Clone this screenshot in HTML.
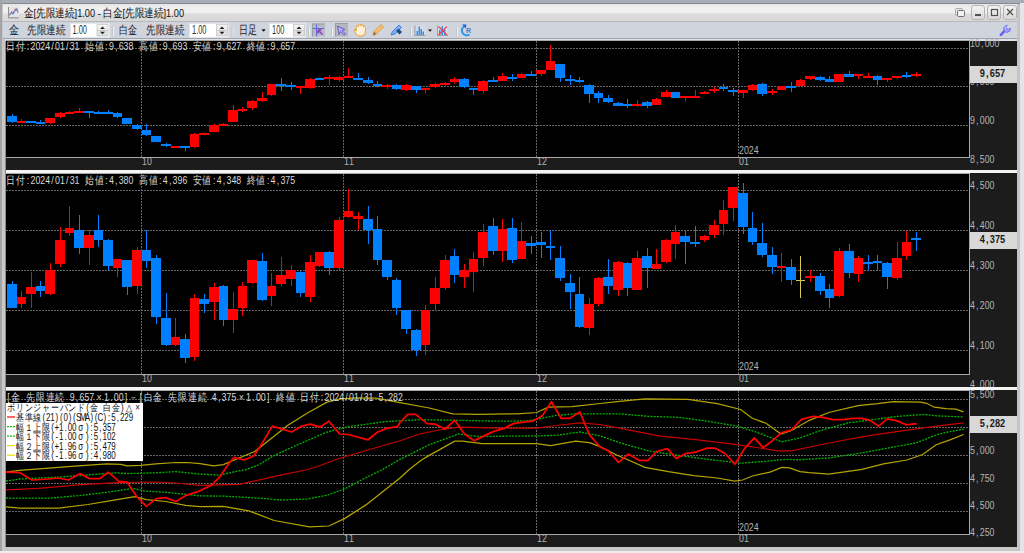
<!DOCTYPE html>
<html><head><meta charset="utf-8"><style>
html,body{margin:0;padding:0}
body{width:1024px;height:553px;overflow:hidden;position:relative;background:#e6e6e8;font-family:"Liberation Sans",sans-serif}
.a{position:absolute}
</style></head><body>
<div class="a" style="left:0;top:0;width:1024px;height:3px;background:#a8acb6"></div>
<div class="a" style="left:0;top:3px;width:1024px;height:1px;background:#8a8a8e"></div>
<div class="a" style="left:0;top:0;width:2px;height:553px;background:#a4a4a6"></div>
<div class="a" style="left:2px;top:4px;width:1016px;height:549px;background:#c8c8c8"></div>
<div class="a" style="left:5px;top:39px;width:1px;height:508px;background:#8c8c8c"></div>
<div class="a" style="left:1017px;top:4px;width:3px;height:549px;background:#c4c4c4"></div>
<div class="a" style="left:1020px;top:3px;width:4px;height:550px;background:#e4e4ea"></div>
<div class="a" style="left:3px;top:4px;width:1014px;height:17px;background:linear-gradient(#e4e4e4 0px,#f0f0f0 4px,#eeeeee 9px,#dcdcdc 10px,#d8d8d8 17px)"></div>
<div class="a" style="left:3px;top:21px;width:1014px;height:1px;background:#b8b8b8"></div>
<div class="a" style="left:3px;top:22px;width:1014px;height:16px;background:#d0d4dc"></div>
<div class="a" style="left:3px;top:38px;width:1014px;height:1px;background:#9ca4b4"></div>
<div class="a" style="left:2px;top:547px;width:1016px;height:4px;background:#c8c8c8"></div>
<div class="a" style="left:0px;top:551px;width:1024px;height:2px;background:#eeeef0"></div>
<svg class="a" style="left:0;top:0" width="1024" height="40">
<style>
.tt{font-family:"Liberation Sans",sans-serif;font-size:11.5px;fill:#101010}
.tb{font-family:"Liberation Sans",sans-serif;font-size:12px;fill:#202028}
.inp{font-family:"Liberation Sans",sans-serif;font-size:12px;fill:#303030}
</style>
<!-- title icon -->
<rect x="8" y="7" width="11" height="12" fill="#e4e4e4"/>
<rect x="8" y="7" width="1" height="11" fill="#909090"/>
<rect x="8" y="17" width="11" height="1.5" fill="#a0a0a0"/>
<polyline points="9.5,15.5 11.5,12.5 13,14 15.5,10 16.5,9 18,12.5" fill="none" stroke="#50a0e8" stroke-width="1.3"/>
<polyline points="9.5,14.5 11.5,12 13,13.5 15,9.5 16.5,8.5 18,12" fill="none" stroke="#f04050" stroke-width="1.2" stroke-dasharray="1.5 1.5"/>
<text x="24" y="16.5" class="tt" textLength="160" lengthAdjust="spacingAndGlyphs">金[先限連続]1.00 - 白金[先限連続]1.00</text>
<!-- window buttons -->
<g fill="none" stroke="#8a8a8a" stroke-width="1">
<rect x="955.5" y="8.5" width="7" height="7" rx="1" fill="#e8e8e8" stroke="#a8a8a8"/>
<rect x="957.5" y="10.5" width="7" height="6" rx="1" fill="#f0f0f0" stroke="#707070"/>
</g>
<rect x="971.5" y="5.5" width="13" height="14" rx="2.5" fill="url(#gb)" stroke="#b4b4b4"/>
<rect x="987.5" y="5.5" width="13" height="14" rx="2.5" fill="url(#gb)" stroke="#b4b4b4"/>
<rect x="1003.5" y="5.5" width="13" height="14" rx="2.5" fill="url(#gb)" stroke="#b4b4b4"/>
<defs><linearGradient id="gb" x1="0" y1="0" x2="0" y2="1"><stop offset="0" stop-color="#f4f4f4"/><stop offset="1" stop-color="#d8d8d8"/></linearGradient>
<linearGradient id="sp" x1="0" y1="0" x2="0" y2="1"><stop offset="0" stop-color="#f6f6f6"/><stop offset="1" stop-color="#dcdcdc"/></linearGradient></defs>
<rect x="975" y="14" width="6" height="2" fill="#505050"/>
<rect x="991.5" y="9.5" width="6" height="6" fill="none" stroke="#505050" stroke-width="1.2"/>
<path d="M1007 9 L1013 15 M1013 9 L1007 15" stroke="#505050" stroke-width="1.3"/>
<!-- toolbar -->
<text x="9" y="34" class="tb" textLength="10" lengthAdjust="spacingAndGlyphs">金</text>
<text x="27" y="34" class="tb" textLength="38" lengthAdjust="spacingAndGlyphs">先限連続</text>
<rect x="70.5" y="23.5" width="39" height="14" fill="#fff" stroke="#e4e6ea"/>
<text x="72.5" y="33.5" class="inp" textLength="14.5" lengthAdjust="spacingAndGlyphs">1.00</text>
<rect x="97" y="24.5" width="11" height="11.5" fill="url(#sp)" stroke="#c8c8c8" stroke-width="0.8"/>
<rect x="97" y="30" width="11" height="0.8" fill="#c0c0c0"/>
<path d="M100 29 L102.5 26.5 L105 29 Z M100 31.8 L102.5 34.3 L105 31.8 Z" fill="#202020"/>
<rect x="113" y="27" width="1" height="9" fill="#f2f2f2"/><rect x="112" y="27" width="1" height="9" fill="#c0c4cc"/>
<text x="119" y="34" class="tb" textLength="18" lengthAdjust="spacingAndGlyphs">白金</text>
<text x="146" y="34" class="tb" textLength="38" lengthAdjust="spacingAndGlyphs">先限連続</text>
<rect x="189.5" y="23.5" width="39" height="14" fill="#fff" stroke="#e4e6ea"/>
<text x="192" y="33.5" class="inp" textLength="14.5" lengthAdjust="spacingAndGlyphs">1.00</text>
<rect x="216.5" y="24.5" width="11" height="11.5" fill="url(#sp)" stroke="#c8c8c8" stroke-width="0.8"/>
<rect x="216.5" y="30" width="11" height="0.8" fill="#c0c0c0"/>
<path d="M219.5 29 L222 26.5 L224.5 29 Z M219.5 31.8 L222 34.3 L224.5 31.8 Z" fill="#202020"/>
<rect x="232.5" y="27" width="1" height="9" fill="#f2f2f2"/><rect x="231.5" y="27" width="1" height="9" fill="#c0c4cc"/>
<text x="239" y="34" class="tb" textLength="18" lengthAdjust="spacingAndGlyphs">日足</text>
<path d="M261.5 29.3 L265.7 29.3 L263.6 31.8 Z" fill="#101010"/>
<rect x="269.5" y="23.5" width="36" height="14" fill="#fff" stroke="#e4e6ea"/>
<text x="272" y="33.5" class="inp" textLength="12.5" lengthAdjust="spacingAndGlyphs">100</text>
<rect x="293.5" y="24.5" width="11" height="11.5" fill="url(#sp)" stroke="#c8c8c8" stroke-width="0.8"/>
<rect x="293.5" y="30" width="11" height="0.8" fill="#c0c0c0"/>
<path d="M296.5 29 L299 26.5 L301.5 29 Z M296.5 31.8 L299 34.3 L301.5 31.8 Z" fill="#202020"/>
<rect x="309" y="27" width="1" height="9" fill="#f2f2f2"/><rect x="308" y="27" width="1" height="9" fill="#c0c4cc"/>
<!-- pressed crosshair -->
<rect x="312" y="23.5" width="13" height="13" fill="#b8bcc2"/>
<rect x="312" y="23.5" width="13" height="1" fill="#9a9ea4"/><rect x="312" y="23.5" width="1" height="13" fill="#9a9ea4"/>
<rect x="316" y="24.5" width="1" height="12" fill="#5a6ad8"/>
<rect x="313" y="28" width="11" height="1" fill="#5a6ad8"/>
<path d="M318 30 L322.5 34.5 M318 30 L321.5 30 M318 30 L318 33.5" stroke="#9040c0" stroke-width="1.6"/>
<rect x="332" y="27" width="1" height="9" fill="#f2f2f2"/><rect x="331" y="27" width="1" height="9" fill="#c0c4cc"/>
<!-- pressed pointer -->
<rect x="335" y="23" width="13" height="13.5" fill="#b4b8bc"/>
<rect x="335" y="23" width="13" height="1" fill="#9a9ea4"/><rect x="335" y="23" width="1" height="13.5" fill="#9a9ea4"/>
<path d="M337.5 26 L345 29.5 L342 30.5 L345.5 34 L344 35 L340.5 31.5 L339 34.5 Z" fill="#b8b0f0" stroke="#7058d0" stroke-width="1"/>
<!-- hand -->
<g fill="#fff2d8" stroke="#e8962a" stroke-width="0.9">
<path d="M356.2 31 L356.2 27 Q356.2 25.6 357.4 25.6 Q358.6 25.6 358.6 27 L358.6 25.6 Q358.6 24.2 359.8 24.2 Q361 24.2 361 25.6 L361 26 Q361 24.8 362.2 24.8 Q363.4 24.8 363.4 26 L363.4 27.2 Q363.5 26.2 364.5 26.3 Q365.5 26.4 365.5 27.6 L365.2 32.5 Q364.8 36 361.5 36 L359 36 Q356.8 35.8 355.6 33.2 L354.4 30.6 Q354 29.4 355 29.2 Q355.8 29.1 356.2 31 Z"/>
</g>
<!-- pencil -->
<path d="M373 35.5 L374 31.5 L381 24.5 L383.5 27 L376.5 34 Z" fill="#f4c070" stroke="#e09a40" stroke-width="0.9"/>
<path d="M373 35.5 L374 31.5 L376.5 34 Z" fill="#a07040"/>
<!-- marker -->
<path d="M391 35 L392.5 31.5 L399 25 L401.5 27.5 L395 34 Z" fill="#80b0f0" stroke="#3a78d8" stroke-width="0.9"/>
<path d="M396 31 L399.5 34.5 L402 32 L398.5 28.5 Z" fill="#204a90"/>
<rect x="411" y="27" width="1" height="9" fill="#f2f2f2"/><rect x="410" y="27" width="1" height="9" fill="#c0c4cc"/>
<!-- bar chart -->
<rect x="414.5" y="25.5" width="11" height="10.5" fill="#d8dce2"/>
<rect x="414.5" y="25.5" width="1" height="10.5" fill="#9aa0a8"/>
<rect x="414.5" y="35" width="11" height="1" fill="#9aa0a8"/>
<rect x="416.5" y="31" width="1.5" height="4" fill="#3090f0"/>
<rect x="418.5" y="26.5" width="1.5" height="8.5" fill="#3090f0"/>
<rect x="420.5" y="29" width="1.5" height="6" fill="#3090f0"/>
<rect x="422.5" y="31.5" width="1.5" height="3.5" fill="#3090f0"/>
<path d="M428 29.5 L432 29.5 L430 31.8 Z" fill="#101010"/>
<!-- red x bars -->
<rect x="437" y="25.5" width="11" height="10.5" fill="#d8dce2"/>
<rect x="437" y="25.5" width="1" height="10.5" fill="#9aa0a8"/>
<rect x="437" y="35" width="11" height="1" fill="#9aa0a8"/>
<rect x="439" y="30" width="1.5" height="5" fill="#3090f0"/>
<rect x="441.5" y="26" width="1.5" height="9" fill="#3090f0"/>
<rect x="444" y="30" width="1.5" height="5" fill="#3090f0"/>
<path d="M438.5 26.5 L447 35 M447 26.5 L438.5 35" stroke="#f04050" stroke-width="1.3"/>
<rect x="457" y="27" width="1" height="9" fill="#f2f2f2"/><rect x="456" y="27" width="1" height="9" fill="#c0c4cc"/>
<!-- refresh -->
<path d="M464 26.5 A4.8 4.8 0 1 0 469.5 34.5" fill="none" stroke="#2a9ae8" stroke-width="2"/>
<path d="M462 24.5 L466.5 24.5 L465.5 28.5 Z" fill="#2060e0"/>
<text x="466" y="33" style="font-family:'Liberation Sans',sans-serif;font-size:7px;font-weight:bold;fill:#3a80d0">R</text>
<!-- wrench -->
<path d="M1000.8 34.8 L1005.2 30.4" stroke="#6464f4" stroke-width="2.6" stroke-linecap="round"/>
<path d="M1004.2 31.2 Q1002.6 27.6 1005.6 25.8 L1007.2 25.2 L1006.2 27.8 L1008 29.4 L1010.6 28.4 Q1010.4 32.2 1006.6 32.4 Z" fill="#a0a0fa" stroke="#6a6af2" stroke-width="0.9"/>
<path d="M1005.4 28.6 Q1005.6 27 1006.6 26.4" stroke="#ffffff" stroke-width="0.7" fill="none"/>
</svg>

<svg width="1024" height="553" viewBox="0 0 1024 553" style="position:absolute;left:0;top:0">
<style>
.ax{font-family:"Liberation Sans",sans-serif;font-size:11px;fill:#b4b4b4}
.inf{font-family:"Liberation Sans",sans-serif;font-size:11px;fill:#d8d8d8}
.lg{font-family:"Liberation Sans",sans-serif;font-size:10px;fill:#101010}
.pb{font-family:"Liberation Sans",sans-serif;font-size:10px;font-weight:bold;fill:#181818}
</style>
<defs><clipPath id="c1"><rect x="6" y="41" width="963" height="116"/></clipPath><clipPath id="c2"><rect x="6" y="174" width="963" height="200"/></clipPath><clipPath id="c3"><rect x="6" y="391" width="963" height="143"/></clipPath></defs>
<rect x="6" y="39" width="1011" height="508" fill="#1c1c1c"/>
<rect x="5" y="39" width="1012" height="2" fill="#e2e2e2"/>
<rect x="6" y="41" width="963" height="116" fill="#000"/>
<g clip-path="url(#c1)" shape-rendering="crispEdges">
<line x1="6" y1="48.5" x2="969" y2="48.5" stroke="#686868" stroke-width="1" stroke-dasharray="2 1"/>
<line x1="6" y1="86.5" x2="969" y2="86.5" stroke="#686868" stroke-width="1" stroke-dasharray="2 1"/>
<line x1="6" y1="125.5" x2="969" y2="125.5" stroke="#686868" stroke-width="1" stroke-dasharray="2 1"/>
<line x1="141.5" y1="41" x2="141.5" y2="157" stroke="#686868" stroke-width="1" stroke-dasharray="2 1"/>
<line x1="343.5" y1="41" x2="343.5" y2="157" stroke="#686868" stroke-width="1" stroke-dasharray="2 1"/>
<line x1="536.5" y1="41" x2="536.5" y2="157" stroke="#686868" stroke-width="1" stroke-dasharray="2 1"/>
<line x1="738.5" y1="41" x2="738.5" y2="157" stroke="#686868" stroke-width="1" stroke-dasharray="2 1"/>
</g>
<g clip-path="url(#c1)" shape-rendering="crispEdges"><rect x="12" y="114" width="1" height="9" fill="#0080ff"/>
<rect x="7" y="116" width="10" height="6" fill="#0080ff"/>
<rect x="21" y="119" width="1" height="4" fill="#ff0000"/>
<rect x="17" y="121" width="9" height="2" fill="#ff0000"/>
<rect x="31" y="121" width="1" height="1" fill="#0080ff"/>
<rect x="26" y="121" width="10" height="2" fill="#0080ff"/>
<rect x="40" y="120" width="1" height="4" fill="#0080ff"/>
<rect x="36" y="122" width="9" height="2" fill="#0080ff"/>
<rect x="50" y="118" width="1" height="6" fill="#ff0000"/>
<rect x="45" y="118" width="10" height="5" fill="#ff0000"/>
<rect x="60" y="112" width="1" height="6" fill="#ff0000"/>
<rect x="55" y="113" width="10" height="4" fill="#ff0000"/>
<rect x="69" y="111" width="1" height="2" fill="#ff0000"/>
<rect x="65" y="112" width="9" height="2" fill="#ff0000"/>
<rect x="79" y="108" width="1" height="4" fill="#ff0000"/>
<rect x="74" y="111" width="10" height="2" fill="#ff0000"/>
<rect x="89" y="111" width="1" height="7" fill="#0080ff"/>
<rect x="84" y="111" width="10" height="2" fill="#0080ff"/>
<rect x="98" y="111" width="1" height="2" fill="#0080ff"/>
<rect x="94" y="112" width="9" height="2" fill="#0080ff"/>
<rect x="108" y="110" width="1" height="4" fill="#0080ff"/>
<rect x="103" y="112" width="10" height="2" fill="#0080ff"/>
<rect x="117" y="112" width="1" height="6" fill="#0080ff"/>
<rect x="113" y="113" width="9" height="4" fill="#0080ff"/>
<rect x="127" y="118" width="1" height="6" fill="#0080ff"/>
<rect x="122" y="118" width="10" height="6" fill="#0080ff"/>
<rect x="137" y="124" width="1" height="6" fill="#0080ff"/>
<rect x="132" y="125" width="10" height="4" fill="#0080ff"/>
<rect x="146" y="124" width="1" height="12" fill="#0080ff"/>
<rect x="142" y="130" width="9" height="5" fill="#0080ff"/>
<rect x="156" y="136" width="1" height="6" fill="#0080ff"/>
<rect x="151" y="136" width="10" height="6" fill="#0080ff"/>
<rect x="166" y="143" width="1" height="4" fill="#0080ff"/>
<rect x="161" y="144" width="10" height="2" fill="#0080ff"/>
<rect x="175" y="146" width="1" height="2" fill="#ff0000"/>
<rect x="171" y="146" width="9" height="2" fill="#ff0000"/>
<rect x="185" y="146" width="1" height="5" fill="#0080ff"/>
<rect x="180" y="146" width="10" height="2" fill="#0080ff"/>
<rect x="194" y="133" width="1" height="15" fill="#ff0000"/>
<rect x="190" y="134" width="9" height="13" fill="#ff0000"/>
<rect x="204" y="133" width="1" height="2" fill="#ff0000"/>
<rect x="199" y="133" width="10" height="2" fill="#ff0000"/>
<rect x="214" y="124" width="1" height="8" fill="#ff0000"/>
<rect x="209" y="125" width="10" height="7" fill="#ff0000"/>
<rect x="223" y="123" width="1" height="3" fill="#ff0000"/>
<rect x="219" y="124" width="9" height="2" fill="#ff0000"/>
<rect x="233" y="105" width="1" height="17" fill="#ff0000"/>
<rect x="228" y="110" width="10" height="12" fill="#ff0000"/>
<rect x="242" y="107" width="1" height="5" fill="#ff0000"/>
<rect x="238" y="109" width="9" height="2" fill="#ff0000"/>
<rect x="252" y="100" width="1" height="10" fill="#ff0000"/>
<rect x="247" y="101" width="10" height="7" fill="#ff0000"/>
<rect x="262" y="92" width="1" height="10" fill="#ff0000"/>
<rect x="257" y="98" width="10" height="3" fill="#ff0000"/>
<rect x="271" y="84" width="1" height="12" fill="#ff0000"/>
<rect x="267" y="84" width="9" height="11" fill="#ff0000"/>
<rect x="281" y="78" width="1" height="13" fill="#0080ff"/>
<rect x="276" y="84" width="10" height="2" fill="#0080ff"/>
<rect x="291" y="82" width="1" height="8" fill="#0080ff"/>
<rect x="286" y="85" width="10" height="2" fill="#0080ff"/>
<rect x="300" y="86" width="1" height="8" fill="#ff0000"/>
<rect x="296" y="86" width="9" height="2" fill="#ff0000"/>
<rect x="310" y="78" width="1" height="11" fill="#ff0000"/>
<rect x="305" y="79" width="10" height="9" fill="#ff0000"/>
<rect x="319" y="78" width="1" height="2" fill="#0080ff"/>
<rect x="315" y="78" width="9" height="2" fill="#0080ff"/>
<rect x="329" y="75" width="1" height="10" fill="#ff0000"/>
<rect x="324" y="77" width="10" height="2" fill="#ff0000"/>
<rect x="339" y="76" width="1" height="6" fill="#ff0000"/>
<rect x="334" y="77" width="10" height="3" fill="#ff0000"/>
<rect x="348" y="68" width="1" height="10" fill="#ff0000"/>
<rect x="344" y="76" width="9" height="2" fill="#ff0000"/>
<rect x="358" y="73" width="1" height="7" fill="#0080ff"/>
<rect x="353" y="78" width="10" height="2" fill="#0080ff"/>
<rect x="368" y="77" width="1" height="7" fill="#0080ff"/>
<rect x="363" y="80" width="10" height="3" fill="#0080ff"/>
<rect x="377" y="81" width="1" height="6" fill="#0080ff"/>
<rect x="373" y="84" width="9" height="2" fill="#0080ff"/>
<rect x="387" y="84" width="1" height="5" fill="#ff0000"/>
<rect x="382" y="85" width="10" height="2" fill="#ff0000"/>
<rect x="396" y="84" width="1" height="6" fill="#0080ff"/>
<rect x="392" y="85" width="9" height="4" fill="#0080ff"/>
<rect x="406" y="84" width="1" height="7" fill="#ff0000"/>
<rect x="401" y="85" width="10" height="5" fill="#ff0000"/>
<rect x="416" y="86" width="1" height="7" fill="#0080ff"/>
<rect x="411" y="86" width="10" height="4" fill="#0080ff"/>
<rect x="425" y="88" width="1" height="5" fill="#ff0000"/>
<rect x="421" y="88" width="9" height="2" fill="#ff0000"/>
<rect x="435" y="83" width="1" height="5" fill="#ff0000"/>
<rect x="430" y="84" width="10" height="3" fill="#ff0000"/>
<rect x="445" y="82" width="1" height="5" fill="#ff0000"/>
<rect x="440" y="83" width="10" height="2" fill="#ff0000"/>
<rect x="454" y="77" width="1" height="7" fill="#ff0000"/>
<rect x="450" y="79" width="9" height="3" fill="#ff0000"/>
<rect x="464" y="78" width="1" height="10" fill="#0080ff"/>
<rect x="459" y="79" width="10" height="8" fill="#0080ff"/>
<rect x="473" y="88" width="1" height="7" fill="#0080ff"/>
<rect x="469" y="88" width="9" height="2" fill="#0080ff"/>
<rect x="483" y="80" width="1" height="13" fill="#ff0000"/>
<rect x="478" y="81" width="10" height="10" fill="#ff0000"/>
<rect x="493" y="77" width="1" height="5" fill="#0080ff"/>
<rect x="488" y="80" width="10" height="2" fill="#0080ff"/>
<rect x="502" y="73" width="1" height="8" fill="#ff0000"/>
<rect x="498" y="76" width="9" height="5" fill="#ff0000"/>
<rect x="512" y="74" width="1" height="7" fill="#0080ff"/>
<rect x="507" y="77" width="10" height="2" fill="#0080ff"/>
<rect x="521" y="73" width="1" height="5" fill="#ff0000"/>
<rect x="517" y="74" width="9" height="4" fill="#ff0000"/>
<rect x="531" y="71" width="1" height="5" fill="#0080ff"/>
<rect x="526" y="74" width="10" height="2" fill="#0080ff"/>
<rect x="541" y="70" width="1" height="6" fill="#ff0000"/>
<rect x="536" y="70" width="10" height="4" fill="#ff0000"/>
<rect x="550" y="45" width="1" height="25" fill="#ff0000"/>
<rect x="546" y="61" width="9" height="9" fill="#ff0000"/>
<rect x="560" y="64" width="1" height="18" fill="#0080ff"/>
<rect x="555" y="64" width="10" height="14" fill="#0080ff"/>
<rect x="570" y="75" width="1" height="10" fill="#0080ff"/>
<rect x="565" y="79" width="10" height="2" fill="#0080ff"/>
<rect x="579" y="77" width="1" height="6" fill="#0080ff"/>
<rect x="575" y="80" width="9" height="2" fill="#0080ff"/>
<rect x="589" y="84" width="1" height="19" fill="#0080ff"/>
<rect x="584" y="85" width="10" height="9" fill="#0080ff"/>
<rect x="598" y="91" width="1" height="12" fill="#0080ff"/>
<rect x="594" y="93" width="9" height="5" fill="#0080ff"/>
<rect x="608" y="95" width="1" height="8" fill="#0080ff"/>
<rect x="603" y="98" width="10" height="4" fill="#0080ff"/>
<rect x="618" y="102" width="1" height="4" fill="#0080ff"/>
<rect x="613" y="103" width="10" height="3" fill="#0080ff"/>
<rect x="627" y="99" width="1" height="9" fill="#0080ff"/>
<rect x="623" y="104" width="9" height="2" fill="#0080ff"/>
<rect x="637" y="100" width="1" height="7" fill="#ff0000"/>
<rect x="632" y="104" width="10" height="2" fill="#ff0000"/>
<rect x="647" y="101" width="1" height="7" fill="#0080ff"/>
<rect x="642" y="102" width="10" height="4" fill="#0080ff"/>
<rect x="656" y="98" width="1" height="7" fill="#ff0000"/>
<rect x="652" y="99" width="9" height="6" fill="#ff0000"/>
<rect x="666" y="90" width="1" height="7" fill="#ff0000"/>
<rect x="661" y="92" width="10" height="5" fill="#ff0000"/>
<rect x="675" y="92" width="1" height="6" fill="#0080ff"/>
<rect x="671" y="92" width="9" height="6" fill="#0080ff"/>
<rect x="685" y="96" width="1" height="5" fill="#ff0000"/>
<rect x="680" y="96" width="10" height="2" fill="#ff0000"/>
<rect x="695" y="90" width="1" height="8" fill="#ff0000"/>
<rect x="690" y="96" width="10" height="2" fill="#ff0000"/>
<rect x="704" y="91" width="1" height="3" fill="#ff0000"/>
<rect x="700" y="92" width="9" height="2" fill="#ff0000"/>
<rect x="714" y="87" width="1" height="6" fill="#ff0000"/>
<rect x="709" y="89" width="10" height="2" fill="#ff0000"/>
<rect x="723" y="84" width="1" height="7" fill="#0080ff"/>
<rect x="719" y="87" width="9" height="2" fill="#0080ff"/>
<rect x="733" y="88" width="1" height="8" fill="#0080ff"/>
<rect x="728" y="90" width="10" height="2" fill="#0080ff"/>
<rect x="743" y="90" width="1" height="8" fill="#ff0000"/>
<rect x="738" y="90" width="10" height="3" fill="#ff0000"/>
<rect x="752" y="84" width="1" height="7" fill="#ff0000"/>
<rect x="748" y="85" width="9" height="5" fill="#ff0000"/>
<rect x="762" y="83" width="1" height="13" fill="#0080ff"/>
<rect x="757" y="84" width="10" height="10" fill="#0080ff"/>
<rect x="772" y="89" width="1" height="6" fill="#ff0000"/>
<rect x="767" y="91" width="10" height="2" fill="#ff0000"/>
<rect x="781" y="86" width="1" height="4" fill="#ff0000"/>
<rect x="777" y="86" width="9" height="4" fill="#ff0000"/>
<rect x="791" y="82" width="1" height="10" fill="#0080ff"/>
<rect x="786" y="86" width="10" height="2" fill="#0080ff"/>
<rect x="800" y="79" width="1" height="7" fill="#ff0000"/>
<rect x="796" y="80" width="9" height="6" fill="#ff0000"/>
<rect x="810" y="76" width="1" height="4" fill="#ff0000"/>
<rect x="805" y="76" width="10" height="3" fill="#ff0000"/>
<rect x="820" y="76" width="1" height="5" fill="#0080ff"/>
<rect x="815" y="77" width="10" height="3" fill="#0080ff"/>
<rect x="829" y="76" width="1" height="6" fill="#0080ff"/>
<rect x="825" y="79" width="9" height="3" fill="#0080ff"/>
<rect x="839" y="74" width="1" height="8" fill="#ff0000"/>
<rect x="834" y="74" width="10" height="8" fill="#ff0000"/>
<rect x="849" y="71" width="1" height="6" fill="#0080ff"/>
<rect x="844" y="74" width="10" height="3" fill="#0080ff"/>
<rect x="858" y="74" width="1" height="5" fill="#ff0000"/>
<rect x="854" y="74" width="9" height="2" fill="#ff0000"/>
<rect x="868" y="73" width="1" height="5" fill="#ff0000"/>
<rect x="863" y="76" width="10" height="2" fill="#ff0000"/>
<rect x="877" y="75" width="1" height="10" fill="#0080ff"/>
<rect x="873" y="76" width="9" height="4" fill="#0080ff"/>
<rect x="887" y="78" width="1" height="4" fill="#ff0000"/>
<rect x="882" y="78" width="10" height="2" fill="#ff0000"/>
<rect x="897" y="76" width="1" height="3" fill="#ff0000"/>
<rect x="892" y="76" width="10" height="2" fill="#ff0000"/>
<rect x="906" y="72" width="1" height="6" fill="#0080ff"/>
<rect x="902" y="75" width="9" height="2" fill="#0080ff"/>
<rect x="916" y="72" width="1" height="5" fill="#ff0000"/>
<rect x="911" y="74" width="10" height="2" fill="#ff0000"/></g>
<rect x="6" y="157" width="964" height="1" fill="#a8a8a8"/>
<rect x="969" y="40" width="1" height="118" fill="#a8a8a8"/>
<rect x="6" y="40" width="964" height="1" fill="#a8a8a8"/>
<text transform="scale(0.8,1)" x="1215.56 1221.69 1227.81 1233.94 1240.06 1246.19" y="47" class="ax" text-anchor="middle">10,000</text>
<text transform="scale(0.8,1)" x="1215.56 1221.69 1227.81 1233.94 1240.06" y="85" class="ax" text-anchor="middle">9,500</text>
<text transform="scale(0.8,1)" x="1215.56 1221.69 1227.81 1233.94 1240.06" y="124" class="ax" text-anchor="middle">9,000</text>
<text transform="scale(0.8,1)" x="1215.56 1221.69 1227.81 1233.94 1240.06" y="163" class="ax" text-anchor="middle">8,500</text>
<text transform="scale(0.8,1)" x="180.56 186.69" y="165" class="ax" text-anchor="middle">10</text>
<text transform="scale(0.8,1)" x="433.06 439.19" y="165" class="ax" text-anchor="middle">11</text>
<text transform="scale(0.8,1)" x="674.31 680.44" y="165" class="ax" text-anchor="middle">12</text>
<text transform="scale(0.8,1)" x="926.81 932.94" y="165" class="ax" text-anchor="middle">01</text>
<text transform="scale(0.8,1)" x="926.81 932.94 939.06 945.19" y="154" class="ax" text-anchor="middle">2024</text>
<rect x="970" y="66" width="47" height="17" fill="#d8d8d8"/>
<text transform="scale(0.92,1)" x="1067.74 1073.23 1078.72 1084.21 1089.70" y="77.2" class="pb" text-anchor="middle">9,657</text>
<rect x="6" y="170" width="1011" height="3" fill="#f4f4f4"/>
<rect x="6" y="174" width="963" height="200" fill="#000"/>
<g clip-path="url(#c2)" shape-rendering="crispEdges">
<line x1="6" y1="190.5" x2="969" y2="190.5" stroke="#686868" stroke-width="1" stroke-dasharray="2 1"/>
<line x1="6" y1="230.5" x2="969" y2="230.5" stroke="#686868" stroke-width="1" stroke-dasharray="2 1"/>
<line x1="6" y1="270.5" x2="969" y2="270.5" stroke="#686868" stroke-width="1" stroke-dasharray="2 1"/>
<line x1="6" y1="310.5" x2="969" y2="310.5" stroke="#686868" stroke-width="1" stroke-dasharray="2 1"/>
<line x1="6" y1="350.5" x2="969" y2="350.5" stroke="#686868" stroke-width="1" stroke-dasharray="2 1"/>
<line x1="141.5" y1="174" x2="141.5" y2="374" stroke="#686868" stroke-width="1" stroke-dasharray="2 1"/>
<line x1="343.5" y1="174" x2="343.5" y2="374" stroke="#686868" stroke-width="1" stroke-dasharray="2 1"/>
<line x1="536.5" y1="174" x2="536.5" y2="374" stroke="#686868" stroke-width="1" stroke-dasharray="2 1"/>
<line x1="738.5" y1="174" x2="738.5" y2="374" stroke="#686868" stroke-width="1" stroke-dasharray="2 1"/>
</g>
<g clip-path="url(#c2)" shape-rendering="crispEdges"><rect x="12" y="281" width="1" height="27" fill="#0080ff"/>
<rect x="7" y="284" width="10" height="24" fill="#0080ff"/>
<rect x="21" y="291" width="1" height="17" fill="#ff0000"/>
<rect x="17" y="297" width="9" height="7" fill="#ff0000"/>
<rect x="31" y="272" width="1" height="36" fill="#ff0000"/>
<rect x="26" y="287" width="10" height="7" fill="#ff0000"/>
<rect x="40" y="281" width="1" height="16" fill="#0080ff"/>
<rect x="36" y="286" width="9" height="5" fill="#0080ff"/>
<rect x="50" y="263" width="1" height="32" fill="#ff0000"/>
<rect x="45" y="270" width="10" height="24" fill="#ff0000"/>
<rect x="60" y="227" width="1" height="40" fill="#ff0000"/>
<rect x="55" y="240" width="10" height="24" fill="#ff0000"/>
<rect x="69" y="206" width="1" height="30" fill="#ff0000"/>
<rect x="65" y="228" width="9" height="5" fill="#ff0000"/>
<rect x="79" y="215" width="1" height="39" fill="#0080ff"/>
<rect x="74" y="230" width="10" height="18" fill="#0080ff"/>
<rect x="89" y="230" width="1" height="35" fill="#ff0000"/>
<rect x="84" y="235" width="10" height="13" fill="#ff0000"/>
<rect x="98" y="215" width="1" height="32" fill="#0080ff"/>
<rect x="94" y="230" width="9" height="10" fill="#0080ff"/>
<rect x="108" y="239" width="1" height="31" fill="#0080ff"/>
<rect x="103" y="240" width="10" height="26" fill="#0080ff"/>
<rect x="117" y="259" width="1" height="18" fill="#ff0000"/>
<rect x="113" y="259" width="9" height="9" fill="#ff0000"/>
<rect x="127" y="260" width="1" height="35" fill="#0080ff"/>
<rect x="122" y="260" width="10" height="27" fill="#0080ff"/>
<rect x="137" y="247" width="1" height="47" fill="#ff0000"/>
<rect x="132" y="250" width="10" height="36" fill="#ff0000"/>
<rect x="146" y="230" width="1" height="38" fill="#0080ff"/>
<rect x="142" y="250" width="9" height="11" fill="#0080ff"/>
<rect x="156" y="255" width="1" height="69" fill="#0080ff"/>
<rect x="151" y="258" width="10" height="59" fill="#0080ff"/>
<rect x="166" y="293" width="1" height="53" fill="#0080ff"/>
<rect x="161" y="318" width="10" height="27" fill="#0080ff"/>
<rect x="175" y="318" width="1" height="28" fill="#ff0000"/>
<rect x="171" y="337" width="9" height="8" fill="#ff0000"/>
<rect x="185" y="334" width="1" height="29" fill="#0080ff"/>
<rect x="180" y="339" width="10" height="19" fill="#0080ff"/>
<rect x="194" y="294" width="1" height="67" fill="#ff0000"/>
<rect x="190" y="298" width="9" height="59" fill="#ff0000"/>
<rect x="204" y="294" width="1" height="19" fill="#0080ff"/>
<rect x="199" y="299" width="10" height="5" fill="#0080ff"/>
<rect x="214" y="283" width="1" height="37" fill="#ff0000"/>
<rect x="209" y="287" width="10" height="15" fill="#ff0000"/>
<rect x="223" y="285" width="1" height="41" fill="#0080ff"/>
<rect x="219" y="286" width="9" height="34" fill="#0080ff"/>
<rect x="233" y="292" width="1" height="41" fill="#ff0000"/>
<rect x="228" y="309" width="10" height="11" fill="#ff0000"/>
<rect x="242" y="282" width="1" height="34" fill="#ff0000"/>
<rect x="238" y="286" width="9" height="22" fill="#ff0000"/>
<rect x="252" y="260" width="1" height="24" fill="#ff0000"/>
<rect x="247" y="260" width="10" height="23" fill="#ff0000"/>
<rect x="262" y="253" width="1" height="48" fill="#0080ff"/>
<rect x="257" y="261" width="10" height="39" fill="#0080ff"/>
<rect x="271" y="273" width="1" height="33" fill="#ff0000"/>
<rect x="267" y="286" width="9" height="10" fill="#ff0000"/>
<rect x="281" y="257" width="1" height="29" fill="#ff0000"/>
<rect x="276" y="275" width="10" height="9" fill="#ff0000"/>
<rect x="291" y="265" width="1" height="21" fill="#ff0000"/>
<rect x="286" y="270" width="10" height="9" fill="#ff0000"/>
<rect x="300" y="271" width="1" height="26" fill="#0080ff"/>
<rect x="296" y="272" width="9" height="21" fill="#0080ff"/>
<rect x="310" y="255" width="1" height="47" fill="#ff0000"/>
<rect x="305" y="262" width="10" height="35" fill="#ff0000"/>
<rect x="319" y="252" width="1" height="15" fill="#ff0000"/>
<rect x="315" y="252" width="9" height="14" fill="#ff0000"/>
<rect x="329" y="251" width="1" height="24" fill="#0080ff"/>
<rect x="324" y="252" width="10" height="16" fill="#0080ff"/>
<rect x="339" y="217" width="1" height="53" fill="#ff0000"/>
<rect x="334" y="220" width="10" height="48" fill="#ff0000"/>
<rect x="348" y="189" width="1" height="29" fill="#ff0000"/>
<rect x="344" y="211" width="9" height="6" fill="#ff0000"/>
<rect x="358" y="212" width="1" height="18" fill="#ff0000"/>
<rect x="353" y="216" width="10" height="3" fill="#ff0000"/>
<rect x="368" y="206" width="1" height="38" fill="#0080ff"/>
<rect x="363" y="219" width="10" height="11" fill="#0080ff"/>
<rect x="377" y="216" width="1" height="49" fill="#0080ff"/>
<rect x="373" y="229" width="9" height="31" fill="#0080ff"/>
<rect x="387" y="260" width="1" height="20" fill="#0080ff"/>
<rect x="382" y="260" width="10" height="17" fill="#0080ff"/>
<rect x="396" y="278" width="1" height="37" fill="#0080ff"/>
<rect x="392" y="280" width="9" height="28" fill="#0080ff"/>
<rect x="406" y="310" width="1" height="24" fill="#0080ff"/>
<rect x="401" y="310" width="10" height="19" fill="#0080ff"/>
<rect x="416" y="329" width="1" height="27" fill="#0080ff"/>
<rect x="411" y="330" width="10" height="20" fill="#0080ff"/>
<rect x="425" y="305" width="1" height="50" fill="#ff0000"/>
<rect x="421" y="310" width="9" height="35" fill="#ff0000"/>
<rect x="435" y="277" width="1" height="34" fill="#ff0000"/>
<rect x="430" y="288" width="10" height="16" fill="#ff0000"/>
<rect x="445" y="255" width="1" height="35" fill="#ff0000"/>
<rect x="440" y="260" width="10" height="28" fill="#ff0000"/>
<rect x="454" y="249" width="1" height="34" fill="#0080ff"/>
<rect x="450" y="256" width="9" height="19" fill="#0080ff"/>
<rect x="464" y="264" width="1" height="24" fill="#ff0000"/>
<rect x="459" y="270" width="10" height="7" fill="#ff0000"/>
<rect x="473" y="252" width="1" height="40" fill="#ff0000"/>
<rect x="469" y="259" width="9" height="13" fill="#ff0000"/>
<rect x="483" y="224" width="1" height="42" fill="#ff0000"/>
<rect x="478" y="232" width="10" height="26" fill="#ff0000"/>
<rect x="493" y="218" width="1" height="37" fill="#0080ff"/>
<rect x="488" y="226" width="10" height="25" fill="#0080ff"/>
<rect x="502" y="219" width="1" height="43" fill="#ff0000"/>
<rect x="498" y="229" width="9" height="22" fill="#ff0000"/>
<rect x="512" y="218" width="1" height="45" fill="#0080ff"/>
<rect x="507" y="228" width="10" height="32" fill="#0080ff"/>
<rect x="521" y="222" width="1" height="37" fill="#ff0000"/>
<rect x="517" y="241" width="9" height="18" fill="#ff0000"/>
<rect x="531" y="236" width="1" height="18" fill="#0080ff"/>
<rect x="526" y="243" width="10" height="3" fill="#0080ff"/>
<rect x="541" y="232" width="1" height="26" fill="#0080ff"/>
<rect x="536" y="242" width="10" height="3" fill="#0080ff"/>
<rect x="550" y="230" width="1" height="30" fill="#0080ff"/>
<rect x="546" y="246" width="9" height="2" fill="#0080ff"/>
<rect x="560" y="246" width="1" height="35" fill="#0080ff"/>
<rect x="555" y="258" width="10" height="20" fill="#0080ff"/>
<rect x="570" y="274" width="1" height="35" fill="#0080ff"/>
<rect x="565" y="283" width="10" height="9" fill="#0080ff"/>
<rect x="579" y="277" width="1" height="51" fill="#0080ff"/>
<rect x="575" y="294" width="9" height="33" fill="#0080ff"/>
<rect x="589" y="298" width="1" height="37" fill="#ff0000"/>
<rect x="584" y="304" width="10" height="24" fill="#ff0000"/>
<rect x="598" y="277" width="1" height="29" fill="#ff0000"/>
<rect x="594" y="278" width="9" height="26" fill="#ff0000"/>
<rect x="608" y="259" width="1" height="35" fill="#0080ff"/>
<rect x="603" y="277" width="10" height="9" fill="#0080ff"/>
<rect x="618" y="261" width="1" height="35" fill="#ff0000"/>
<rect x="613" y="262" width="10" height="28" fill="#ff0000"/>
<rect x="627" y="262" width="1" height="34" fill="#0080ff"/>
<rect x="623" y="263" width="9" height="25" fill="#0080ff"/>
<rect x="637" y="251" width="1" height="39" fill="#ff0000"/>
<rect x="632" y="258" width="10" height="32" fill="#ff0000"/>
<rect x="647" y="248" width="1" height="40" fill="#0080ff"/>
<rect x="642" y="256" width="10" height="12" fill="#0080ff"/>
<rect x="656" y="249" width="1" height="20" fill="#ff0000"/>
<rect x="652" y="264" width="9" height="5" fill="#ff0000"/>
<rect x="666" y="239" width="1" height="24" fill="#ff0000"/>
<rect x="661" y="240" width="10" height="22" fill="#ff0000"/>
<rect x="675" y="225" width="1" height="34" fill="#ff0000"/>
<rect x="671" y="232" width="9" height="12" fill="#ff0000"/>
<rect x="685" y="231" width="1" height="33" fill="#0080ff"/>
<rect x="680" y="236" width="10" height="6" fill="#0080ff"/>
<rect x="695" y="226" width="1" height="21" fill="#0080ff"/>
<rect x="690" y="242" width="10" height="2" fill="#0080ff"/>
<rect x="704" y="235" width="1" height="7" fill="#ff0000"/>
<rect x="700" y="236" width="9" height="4" fill="#ff0000"/>
<rect x="714" y="220" width="1" height="18" fill="#ff0000"/>
<rect x="709" y="225" width="10" height="10" fill="#ff0000"/>
<rect x="723" y="200" width="1" height="35" fill="#ff0000"/>
<rect x="719" y="210" width="9" height="14" fill="#ff0000"/>
<rect x="733" y="187" width="1" height="34" fill="#ff0000"/>
<rect x="728" y="187" width="10" height="21" fill="#ff0000"/>
<rect x="743" y="183" width="1" height="51" fill="#0080ff"/>
<rect x="738" y="193" width="10" height="34" fill="#0080ff"/>
<rect x="752" y="212" width="1" height="33" fill="#0080ff"/>
<rect x="748" y="228" width="9" height="14" fill="#0080ff"/>
<rect x="762" y="223" width="1" height="34" fill="#0080ff"/>
<rect x="757" y="243" width="10" height="12" fill="#0080ff"/>
<rect x="772" y="247" width="1" height="27" fill="#0080ff"/>
<rect x="767" y="255" width="10" height="12" fill="#0080ff"/>
<rect x="781" y="253" width="1" height="29" fill="#ff0000"/>
<rect x="777" y="266" width="9" height="2" fill="#ff0000"/>
<rect x="791" y="259" width="1" height="26" fill="#0080ff"/>
<rect x="786" y="267" width="10" height="13" fill="#0080ff"/>
<rect x="800" y="256" width="1" height="42" fill="#d8c850"/>
<rect x="796" y="280" width="9" height="1" fill="#d8c850"/>
<rect x="810" y="270" width="1" height="12" fill="#ff0000"/>
<rect x="805" y="276" width="10" height="2" fill="#ff0000"/>
<rect x="820" y="273" width="1" height="22" fill="#0080ff"/>
<rect x="815" y="276" width="10" height="15" fill="#0080ff"/>
<rect x="829" y="284" width="1" height="24" fill="#0080ff"/>
<rect x="825" y="289" width="9" height="9" fill="#0080ff"/>
<rect x="839" y="248" width="1" height="49" fill="#ff0000"/>
<rect x="834" y="251" width="10" height="45" fill="#ff0000"/>
<rect x="849" y="244" width="1" height="34" fill="#0080ff"/>
<rect x="844" y="251" width="10" height="22" fill="#0080ff"/>
<rect x="858" y="256" width="1" height="26" fill="#ff0000"/>
<rect x="854" y="258" width="9" height="16" fill="#ff0000"/>
<rect x="868" y="255" width="1" height="15" fill="#0080ff"/>
<rect x="863" y="262" width="10" height="2" fill="#0080ff"/>
<rect x="877" y="255" width="1" height="16" fill="#0080ff"/>
<rect x="873" y="261" width="9" height="2" fill="#0080ff"/>
<rect x="887" y="262" width="1" height="27" fill="#0080ff"/>
<rect x="882" y="263" width="10" height="14" fill="#0080ff"/>
<rect x="897" y="242" width="1" height="38" fill="#ff0000"/>
<rect x="892" y="258" width="10" height="20" fill="#ff0000"/>
<rect x="906" y="231" width="1" height="29" fill="#ff0000"/>
<rect x="902" y="242" width="9" height="14" fill="#ff0000"/>
<rect x="916" y="232" width="1" height="19" fill="#0080ff"/>
<rect x="911" y="238" width="10" height="2" fill="#0080ff"/></g>
<rect x="6" y="374" width="964" height="1" fill="#a8a8a8"/>
<rect x="969" y="173" width="1" height="202" fill="#a8a8a8"/>
<rect x="6" y="173" width="964" height="1" fill="#a8a8a8"/>
<text transform="scale(0.8,1)" x="1215.56 1221.69 1227.81 1233.94 1240.06" y="189" class="ax" text-anchor="middle">4,500</text>
<text transform="scale(0.8,1)" x="1215.56 1221.69 1227.81 1233.94 1240.06" y="229" class="ax" text-anchor="middle">4,400</text>
<text transform="scale(0.8,1)" x="1215.56 1221.69 1227.81 1233.94 1240.06" y="269" class="ax" text-anchor="middle">4,300</text>
<text transform="scale(0.8,1)" x="1215.56 1221.69 1227.81 1233.94 1240.06" y="309" class="ax" text-anchor="middle">4,200</text>
<text transform="scale(0.8,1)" x="1215.56 1221.69 1227.81 1233.94 1240.06" y="349" class="ax" text-anchor="middle">4,100</text>
<text transform="scale(0.8,1)" x="1215.56 1221.69 1227.81 1233.94 1240.06" y="388" class="ax" text-anchor="middle">4,000</text>
<text transform="scale(0.8,1)" x="180.56 186.69" y="382" class="ax" text-anchor="middle">10</text>
<text transform="scale(0.8,1)" x="433.06 439.19" y="382" class="ax" text-anchor="middle">11</text>
<text transform="scale(0.8,1)" x="674.31 680.44" y="382" class="ax" text-anchor="middle">12</text>
<text transform="scale(0.8,1)" x="926.81 932.94" y="382" class="ax" text-anchor="middle">01</text>
<text transform="scale(0.8,1)" x="926.81 932.94 939.06 945.19" y="370" class="ax" text-anchor="middle">2024</text>
<rect x="970" y="232" width="47" height="17" fill="#d8d8d8"/>
<text transform="scale(0.92,1)" x="1067.74 1073.23 1078.72 1084.21 1089.70" y="243.2" class="pb" text-anchor="middle">4,375</text>
<rect x="6" y="387" width="1011" height="3" fill="#f4f4f4"/>
<rect x="6" y="391" width="963" height="143" fill="#000"/>
<g clip-path="url(#c3)" shape-rendering="crispEdges">
<line x1="6" y1="399.5" x2="969" y2="399.5" stroke="#686868" stroke-width="1" stroke-dasharray="2 1"/>
<line x1="6" y1="427.5" x2="969" y2="427.5" stroke="#686868" stroke-width="1" stroke-dasharray="2 1"/>
<line x1="6" y1="455.5" x2="969" y2="455.5" stroke="#686868" stroke-width="1" stroke-dasharray="2 1"/>
<line x1="6" y1="483.5" x2="969" y2="483.5" stroke="#686868" stroke-width="1" stroke-dasharray="2 1"/>
<line x1="6" y1="511.5" x2="969" y2="511.5" stroke="#686868" stroke-width="1" stroke-dasharray="2 1"/>
<line x1="141.5" y1="391" x2="141.5" y2="534" stroke="#686868" stroke-width="1" stroke-dasharray="2 1"/>
<line x1="343.5" y1="391" x2="343.5" y2="534" stroke="#686868" stroke-width="1" stroke-dasharray="2 1"/>
<line x1="536.5" y1="391" x2="536.5" y2="534" stroke="#686868" stroke-width="1" stroke-dasharray="2 1"/>
<line x1="738.5" y1="391" x2="738.5" y2="534" stroke="#686868" stroke-width="1" stroke-dasharray="2 1"/>
</g>
<g clip-path="url(#c3)"><polyline points="6.0,472.2 19.5,470.3 39.0,468.9 58.6,467.3 78.0,465.8 107.4,463.8 121.0,464.4 127.0,465.8 140.6,465.4 156.0,463.8 175.8,462.5 187.5,462.5 200.0,463.7 213.7,465.8 223.4,464.6 239.0,458.0 254.7,451.5 268.4,440.8 287.9,425.2 307.4,413.0 327.0,402.1 340.6,398.8 356.2,397.8 375.8,398.2 400.0,402.7 429.3,408.0 452.7,413.8 478.0,414.4 517.0,413.8 536.7,412.5 548.4,407.2 571.9,406.6 600.0,403.5 619.5,401.3 644.9,398.8 687.9,399.4 717.2,403.7 740.6,409.5 752.3,418.3 766.0,423.2 781.0,434.0 791.5,430.5 809.3,420.3 828.8,412.5 858.1,405.6 877.7,403.7 893.3,401.7 920.6,402.1 926.5,403.3 934.3,407.2 946.0,408.6 955.8,409.1 963.6,411.9" fill="none" stroke="#b4a400" stroke-width="1.25"/><polyline points="6.0,506.8 19.5,508.0 58.6,508.0 87.9,504.5 117.0,499.6 134.8,496.6 146.5,499.6 166.0,501.5 185.5,505.4 200.0,506.6 223.4,506.5 248.8,510.8 274.2,520.5 309.4,526.8 328.9,526.0 344.5,518.6 366.0,504.9 400.0,478.0 409.8,469.1 421.5,460.0 429.3,455.4 454.7,441.2 462.5,441.2 482.0,443.7 536.7,443.7 550.4,445.7 575.8,441.2 589.5,442.7 600.0,446.6 615.6,454.5 631.2,461.3 644.9,467.4 668.4,471.7 693.8,475.6 717.2,478.0 734.8,481.1 742.6,480.0 752.3,476.0 770.0,472.1 781.6,467.4 789.5,467.8 800.0,471.7 809.3,472.7 828.8,474.0 862.0,469.4 883.5,463.9 907.0,460.0 922.6,454.5 936.2,444.7 950.0,439.8 963.6,434.5" fill="none" stroke="#b4a400" stroke-width="1.25"/><polyline points="6.0,481.0 19.5,479.0 58.6,477.1 97.7,474.2 117.0,472.8 127.0,473.6 156.0,472.8 175.8,471.6 200.0,474.1 219.5,475.2 239.0,470.7 245.0,470.0 258.6,464.9 272.3,456.4 297.7,444.7 327.0,432.0 346.5,427.1 366.0,424.2 385.5,421.6 400.0,420.8 419.5,419.7 458.6,420.3 497.7,421.2 527.0,420.9 536.7,419.3 556.2,415.4 575.8,413.8 600.0,413.8 619.5,413.8 648.8,416.4 678.1,417.3 707.4,421.2 736.7,426.1 756.2,432.0 781.6,441.8 800.0,438.0 819.0,431.0 848.4,422.8 877.7,418.9 897.2,416.4 924.5,414.4 936.2,415.8 963.6,417.0" fill="none" stroke="#00b400" stroke-width="1.3" stroke-dasharray="2 1.2"/><polyline points="6.0,498.2 48.8,498.2 78.0,495.7 107.4,492.3 132.8,488.4 146.5,491.2 166.0,492.3 200.0,495.9 223.4,496.1 258.6,498.1 282.0,500.0 307.4,499.0 327.0,495.2 344.5,488.9 366.0,477.6 381.6,470.0 400.0,459.3 429.3,444.7 458.6,434.0 478.0,436.5 536.7,435.9 556.2,435.3 579.7,432.0 600.0,435.9 619.5,442.7 648.8,450.9 678.1,455.4 707.4,459.3 740.6,463.2 766.0,461.3 785.5,459.3 800.0,459.8 828.8,458.0 858.1,453.5 887.4,448.2 916.7,442.7 936.2,434.9 948.0,432.0 963.6,429.1" fill="none" stroke="#00b400" stroke-width="1.3" stroke-dasharray="2 1.2"/><polyline points="6.0,489.8 39.0,488.4 78.0,484.9 117.0,482.6 156.0,482.0 175.8,483.0 200.0,485.4 239.0,484.4 278.0,475.6 305.5,470.0 317.0,466.8 336.7,459.3 366.0,450.5 400.0,440.8 419.5,434.0 439.0,430.0 458.6,427.1 497.7,428.1 536.7,428.1 556.2,425.5 579.7,422.8 600.0,424.5 619.5,428.1 658.6,435.9 697.7,439.8 736.7,444.7 760.0,448.0 777.8,450.8 791.5,450.8 814.7,446.0 842.0,440.5 869.4,435.7 900.0,431.2 936.2,426.1 963.6,422.8" fill="none" stroke="#c80000" stroke-width="1.2"/><polyline points="6.0,472.2 19.5,472.6 32.0,480.0 48.8,479.0 58.6,478.0 68.4,480.0 80.0,473.6 89.8,478.7 99.6,478.7 108.4,472.2 119.0,481.4 127.0,482.0 136.7,496.6 146.5,506.4 156.2,498.6 166.0,497.6 175.8,501.5 185.5,495.7 200.0,490.8 211.7,485.0 219.5,477.2 229.3,462.9 234.2,457.4 244.0,460.0 253.7,456.0 262.5,442.7 272.3,426.1 291.8,432.0 301.6,426.1 310.4,424.2 320.1,427.1 328.9,421.2 339.6,434.0 348.4,434.5 368.0,439.8 377.7,432.0 387.5,428.1 397.3,426.7 400.0,422.5 407.8,414.4 415.6,414.4 427.3,423.6 435.2,424.2 445.0,429.0 454.7,420.3 464.5,434.0 474.2,440.8 484.0,435.9 493.8,431.4 503.5,428.7 513.3,423.6 523.0,422.2 532.8,421.2 542.6,415.4 551.4,401.7 561.1,418.3 569.9,418.3 579.7,411.9 589.5,434.9 600.0,447.0 607.8,450.5 618.6,462.3 628.3,454.1 639.0,460.3 647.9,460.3 656.6,451.5 667.4,448.6 676.2,458.4 685.9,453.5 695.7,452.1 706.4,448.2 715.2,448.2 725.0,453.5 734.8,464.2 744.5,448.6 754.3,437.9 763.1,447.6 771.9,441.2 781.6,432.6 791.4,430.0 801.5,419.3 813.2,416.4 823.0,417.3 832.7,419.7 842.5,419.7 852.3,418.3 862.0,418.3 869.8,420.3 878.6,426.1 887.4,418.9 897.2,420.9 906.0,424.8 916.7,423.6" fill="none" stroke="#ff0000" stroke-width="1.75" stroke-linejoin="round"/></g>
<rect x="6" y="534" width="964" height="1" fill="#a8a8a8"/>
<rect x="969" y="390" width="1" height="145" fill="#a8a8a8"/>
<rect x="6" y="390" width="964" height="1" fill="#a8a8a8"/>
<text transform="scale(0.8,1)" x="1215.56 1221.69 1227.81 1233.94 1240.06" y="398" class="ax" text-anchor="middle">5,500</text>
<text transform="scale(0.8,1)" x="1215.56 1221.69 1227.81 1233.94 1240.06" y="426" class="ax" text-anchor="middle">5,250</text>
<text transform="scale(0.8,1)" x="1215.56 1221.69 1227.81 1233.94 1240.06" y="454" class="ax" text-anchor="middle">5,000</text>
<text transform="scale(0.8,1)" x="1215.56 1221.69 1227.81 1233.94 1240.06" y="482" class="ax" text-anchor="middle">4,750</text>
<text transform="scale(0.8,1)" x="1215.56 1221.69 1227.81 1233.94 1240.06" y="509" class="ax" text-anchor="middle">4,500</text>
<text transform="scale(0.8,1)" x="1215.56 1221.69 1227.81 1233.94 1240.06" y="536" class="ax" text-anchor="middle">4,250</text>
<text transform="scale(0.8,1)" x="180.56 186.69" y="542" class="ax" text-anchor="middle">10</text>
<text transform="scale(0.8,1)" x="433.06 439.19" y="542" class="ax" text-anchor="middle">11</text>
<text transform="scale(0.8,1)" x="674.31 680.44" y="542" class="ax" text-anchor="middle">12</text>
<text transform="scale(0.8,1)" x="926.81 932.94" y="542" class="ax" text-anchor="middle">01</text>
<text transform="scale(0.8,1)" x="926.81 932.94 939.06 945.19" y="531" class="ax" text-anchor="middle">2024</text>
<rect x="970" y="416" width="47" height="17" fill="#d8d8d8"/>
<text transform="scale(0.92,1)" x="1067.74 1073.23 1078.72 1084.21 1089.70" y="427.2" class="pb" text-anchor="middle">5,282</text>
<text transform="scale(0.8,1)" x="13.62 25.88 35.06 41.19 47.31 53.44 59.56 65.69 71.81 77.94 84.06 90.19 96.31 102.44 111.63 123.88 133.06 139.19 145.31 151.44 157.56 163.69 169.81 179.00 191.25 200.44 206.56 212.69 218.81 224.94 231.06 237.19 246.38 258.63 267.81 273.94 280.06 286.19 292.31 298.44 304.56 313.75 326.00 335.19 341.31 347.44 353.56 359.69 365.81" y="50" class="inf" text-anchor="middle">日付:2024/01/31 始値:9,638 高値:9,693 安値:9,627 終値:9,657</text>
<text transform="scale(0.8,1)" x="13.62 25.88 35.06 41.19 47.31 53.44 59.56 65.69 71.81 77.94 84.06 90.19 96.31 102.44 111.63 123.88 133.06 139.19 145.31 151.44 157.56 163.69 169.81 179.00 191.25 200.44 206.56 212.69 218.81 224.94 231.06 237.19 246.38 258.63 267.81 273.94 280.06 286.19 292.31 298.44 304.56 313.75 326.00 335.19 341.31 347.44 353.56 359.69 365.81" y="184" class="inf" text-anchor="middle">日付:2024/01/31 始値:4,380 高値:4,396 安値:4,348 終値:4,375</text>
<text transform="scale(0.8,1)" x="10.56 19.75 28.94 38.12 50.38 62.62 74.88 84.06 90.19 96.31 102.44 108.56 114.69 123.88 133.06 139.19 145.31 151.44 157.56 166.75 175.94 185.13 197.38 206.56 215.75 228.00 240.25 252.50 261.69 267.81 273.94 280.06 286.19 292.31 301.50 310.69 316.81 322.94 329.06 335.19 341.31 350.50 362.75 371.94 381.13 393.38 402.56 408.69 414.81 420.94 427.06 433.19 439.31 445.44 451.56 457.69 463.81 469.94 476.06 482.19 488.31 494.44 500.56" y="401" class="inf" text-anchor="middle">[金 先限連続 9,657×1.00]－[白金 先限連続 4,375×1.00] 終値 日付:2024/01/31 5,282</text>
<rect x="6" y="403" width="137" height="58" fill="#ffffff"/>
<text transform="scale(0.8,1)" x="14.19 25.06 35.94 46.81 57.69 68.56 79.44 90.31 101.19 109.34 117.50 125.66 133.81 144.69 152.84 161.00 171.88" y="411.5" class="lg" text-anchor="middle">ボリンジャーバンド(金 白金)△×</text>
<line x1="7" y1="417.0" x2="15" y2="417.0" stroke="#ff0000" stroke-width="1.2"/>
<text transform="scale(0.8,1)" x="24.94 35.81 46.69 54.84 60.28 65.72 71.16 76.59 82.03 87.47 92.91 98.34 103.78 109.22 114.66 120.09 125.53 130.97 136.41 141.84 147.28 152.72 158.16 163.59" y="421.0" class="lg" text-anchor="middle">基準線(21)(0)(SMA)(C):5,229</text>
<line x1="7" y1="426.6" x2="15" y2="426.6" stroke="#00c800" stroke-width="1.2" stroke-dasharray="2 1"/>
<text transform="scale(0.8,1)" x="24.94 35.81 46.69 57.56 65.72 71.16 76.59 82.03 87.47 92.91 101.06 109.22 114.66 120.09 125.53 130.97 136.41 141.84" y="430.55" class="lg" text-anchor="middle">幅１上限(+1.00σ):5,357</text>
<line x1="7" y1="436.1" x2="15" y2="436.1" stroke="#00c800" stroke-width="1.2" stroke-dasharray="2 1"/>
<text transform="scale(0.8,1)" x="24.94 35.81 46.69 57.56 65.72 71.16 76.59 82.03 87.47 92.91 101.06 109.22 114.66 120.09 125.53 130.97 136.41 141.84" y="440.1" class="lg" text-anchor="middle">幅１下限(-1.00σ):5,102</text>
<line x1="7" y1="445.6" x2="15" y2="445.6" stroke="#e8e000" stroke-width="1.2"/>
<text transform="scale(0.8,1)" x="24.94 35.81 46.69 57.56 65.72 71.16 76.59 82.03 87.47 92.91 101.06 109.22 114.66 120.09 125.53 130.97 136.41 141.84" y="449.65" class="lg" text-anchor="middle">幅２上限(+1.96σ):5,479</text>
<line x1="7" y1="455.2" x2="15" y2="455.2" stroke="#e8e000" stroke-width="1.2"/>
<text transform="scale(0.8,1)" x="24.94 35.81 46.69 57.56 65.72 71.16 76.59 82.03 87.47 92.91 101.06 109.22 114.66 120.09 125.53 130.97 136.41 141.84" y="459.2" class="lg" text-anchor="middle">幅２下限(-1.96σ):4,980</text>
</svg>
</body></html>
